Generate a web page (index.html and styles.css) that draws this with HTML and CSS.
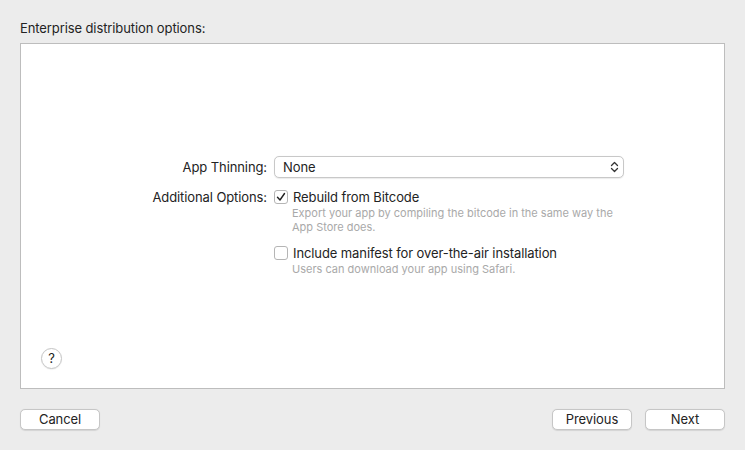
FILE: index.html
```html
<!DOCTYPE html>
<html>
<head>
<meta charset="utf-8">
<link rel="stylesheet" href="styles.css">
</head>
<body>
<div class="window">
  <div class="title">Enterprise distribution options:</div>
  <div class="panel">
    <div class="form">
      <div class="label label-popup">App Thinning:</div>
      <div class="popup">
        <span class="popup-value">None</span>
        <svg class="popup-arrows" width="9" height="12" viewBox="0 0 9 12"><path d="M1.5 4.5 L4.5 1.5 L7.5 4.5 M1.5 7.5 L4.5 10.5 L7.5 7.5" fill="none" stroke="#333" stroke-width="1.3" stroke-linecap="round" stroke-linejoin="round"/></svg>
      </div>
      <div class="label label-check">Additional Options:</div>
      <div class="options">
        <div class="option">
          <div class="check-row">
            <span class="checkbox"><svg width="14" height="14" viewBox="0 0 14 14"><path d="M3.5 7.2 L6 10 L10.5 3.5" fill="none" stroke="#222" stroke-width="1.4" stroke-linecap="round" stroke-linejoin="round"/></svg></span>
            <span class="check-label">Rebuild from Bitcode</span>
          </div>
          <div class="desc">Export your app by compiling the bitcode in the same way the App Store does.</div>
        </div>
        <div class="option">
          <div class="check-row">
            <span class="checkbox"></span>
            <span class="check-label">Include manifest for over-the-air installation</span>
          </div>
          <div class="desc">Users can download your app using Safari.</div>
        </div>
      </div>
    </div>
    <div class="help">?</div>
  </div>
  <div class="footer">
    <button class="btn">Cancel</button>
    <div class="spacer"></div>
    <button class="btn">Previous</button>
    <button class="btn">Next</button>
  </div>
</div>
</body>
</html>
```

FILE: styles.css
```css
html, body {
  margin: 0;
  padding: 0;
  background: #ececec;
}
body {
  font-family: Inter, "Liberation Sans", Arial, sans-serif;
  font-size: 13px;
  letter-spacing: -0.1px;
  color: #232323;
  width: 745px;
  height: 450px;
  overflow: hidden;
}
.window {
  display: flex;
  flex-direction: column;
  padding: 0 20px 0 20px;
  height: 450px;
  box-sizing: border-box;
}
.title {
  height: 43px;
  line-height: 16px;
  padding-top: 20px;
  box-sizing: border-box;
}
.panel {
  background: #fff;
  border: 1px solid #bdbdbd;
  height: 346px;
  box-sizing: border-box;
  display: flex;
  flex-direction: column;
  padding-top: 112px;
}
.form {
  display: grid;
  grid-template-columns: 246px 350px;
  column-gap: 7px;
  row-gap: 11px;
  align-items: start;
}
.label {
  text-align: right;
}
.label-popup {
  line-height: 22px;
}
.label-check {
  line-height: 16px;
}
.popup {
  height: 22px;
  box-sizing: border-box;
  border: 1px solid #c8c8c8;
  border-radius: 5px;
  background: #fff;
  box-shadow: 0 0.5px 1px rgba(0,0,0,0.08);
  display: flex;
  align-items: center;
  justify-content: space-between;
  padding: 0 4px 0 8px;
}
.popup-arrows {
  display: block;
}
.options {
  display: flex;
  flex-direction: column;
  gap: 11px;
}
.check-row {
  display: flex;
  align-items: center;
  gap: 5px;
  height: 16px;
}
.checkbox {
  width: 14px;
  height: 14px;
  box-sizing: border-box;
  border: 1px solid #b5b5b5;
  border-radius: 3px;
  background: #fff;
  display: flex;
  align-items: center;
  justify-content: center;
  flex-shrink: 0;
}
.checkbox svg {
  display: block;
  margin: -1px;
}
.desc {
  padding-left: 18px;
  font-size: 11px;
  letter-spacing: 0;
  line-height: 14px;
  color: #a9a9a9;
  margin-top: 1px;
  width: 332px;
}
.help {
  margin-top: auto;
  margin-left: 20px;
  margin-bottom: 19px;
  width: 21px;
  height: 21px;
  box-sizing: border-box;
  border: 1px solid #c4c4c4;
  border-radius: 50%;
  box-shadow: 0 0.5px 1px rgba(0,0,0,0.1);
  text-align: center;
  line-height: 19px;
  font-size: 13px;
  color: #222;
}
.footer {
  display: flex;
  gap: 13px;
  margin-top: 20px;
}
.spacer {
  flex: 1;
}
.btn {
  width: 80px;
  height: 21px;
  box-sizing: border-box;
  border: 1px solid #c6c6c6;
  border-radius: 5px;
  background: #fff;
  box-shadow: 0 0.5px 1px rgba(0,0,0,0.1);
  font-family: Inter, "Liberation Sans", Arial, sans-serif;
  font-size: 13px;
  letter-spacing: -0.1px;
  color: #232323;
  padding: 0;
  line-height: 19px;
}
```
